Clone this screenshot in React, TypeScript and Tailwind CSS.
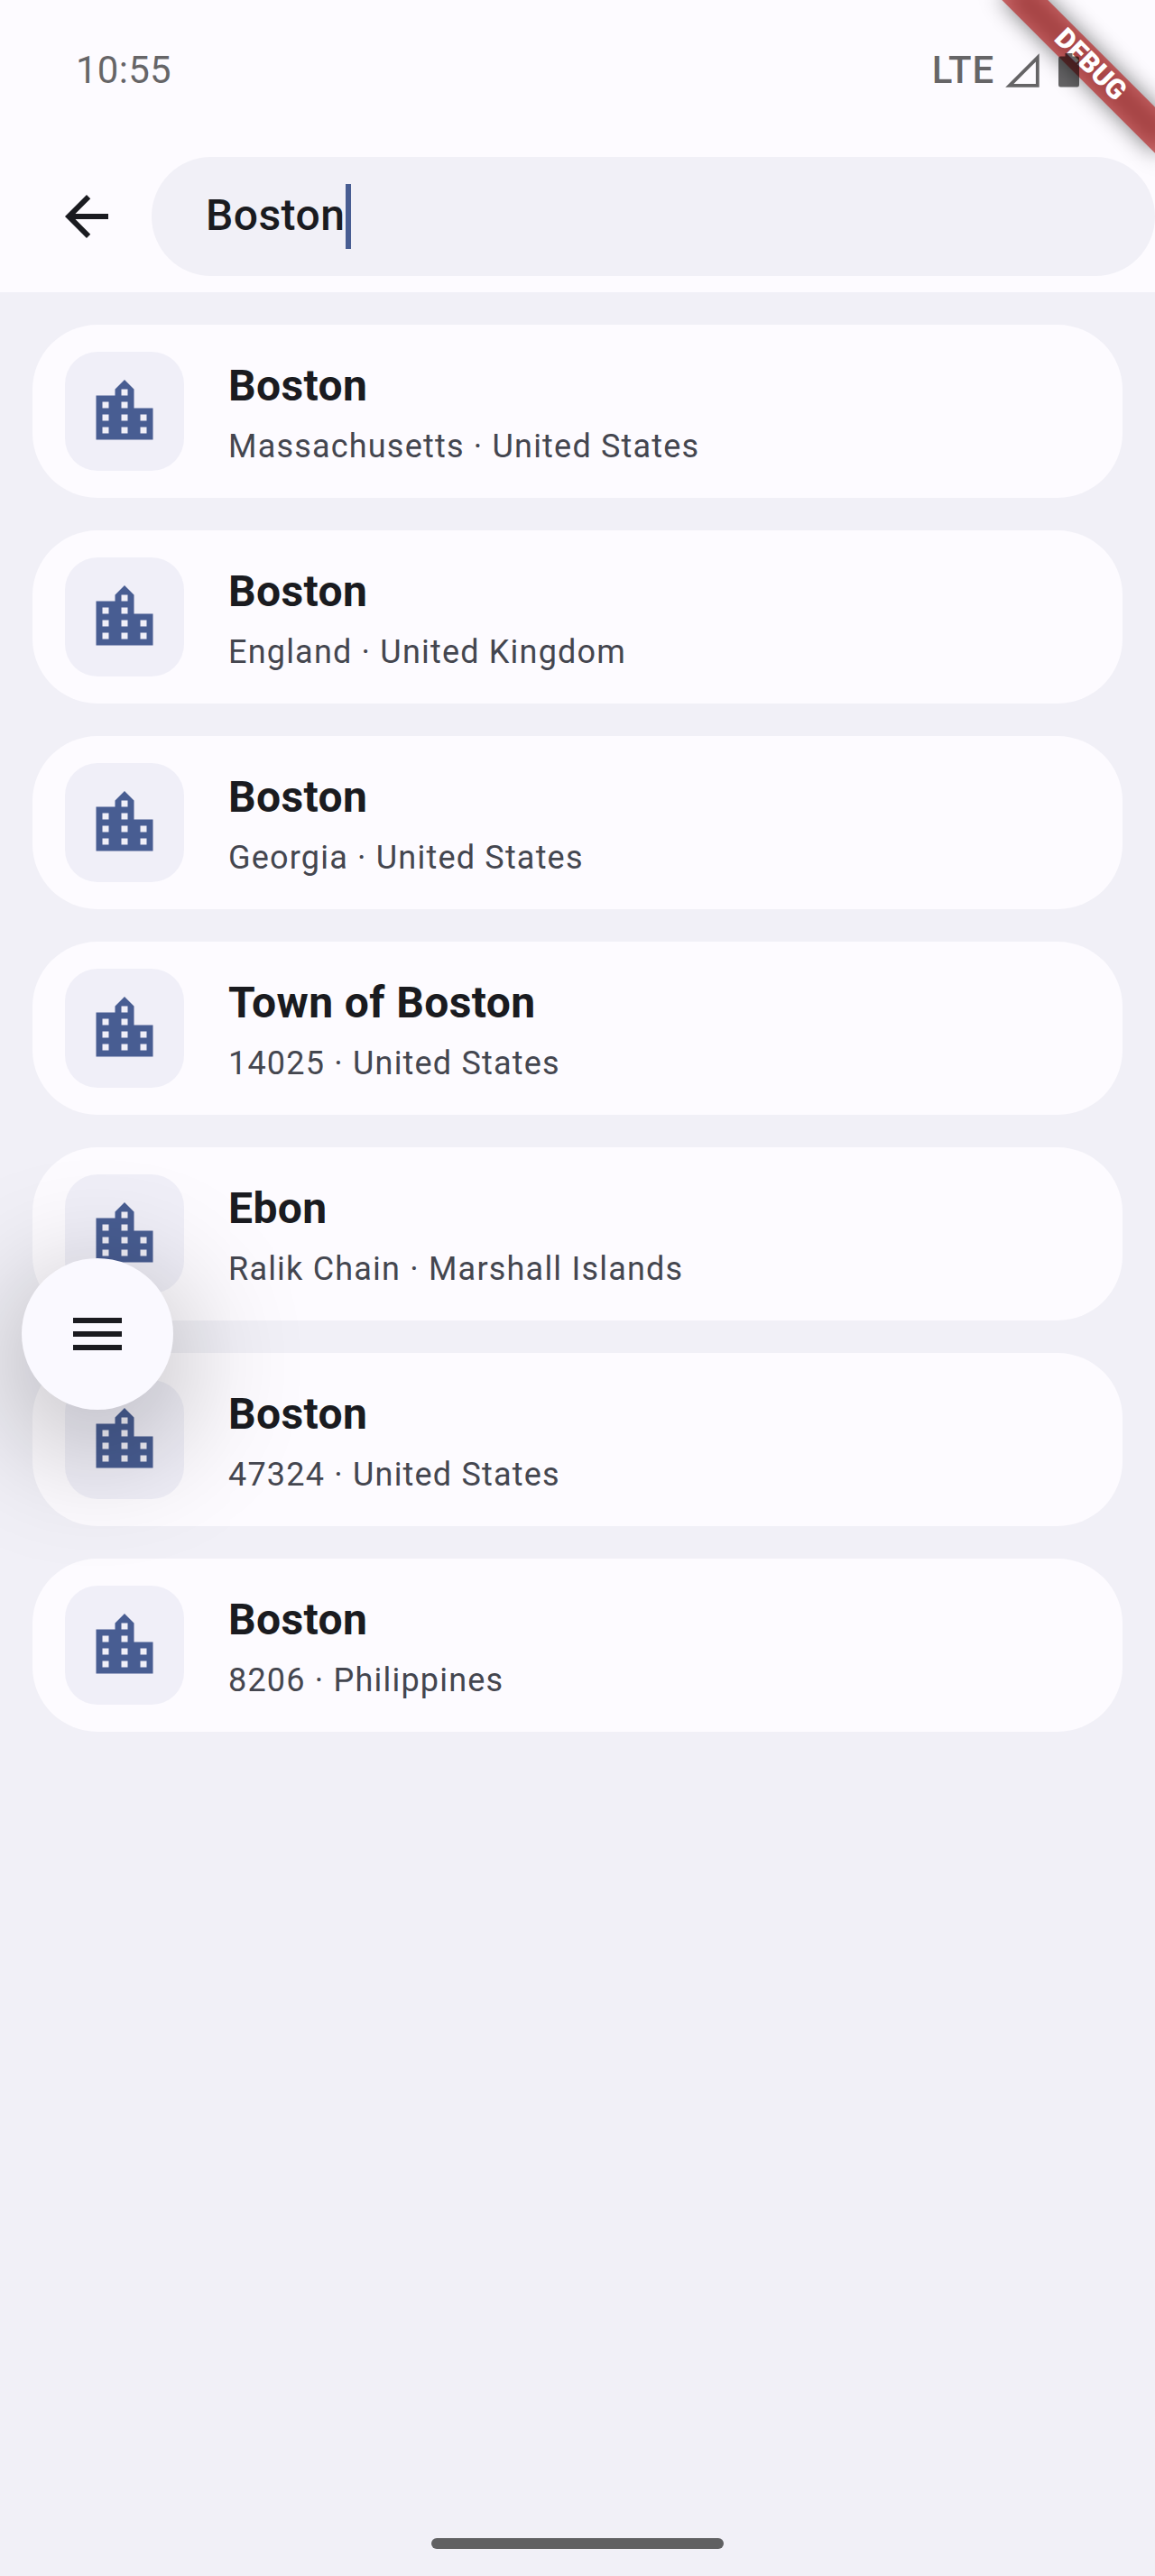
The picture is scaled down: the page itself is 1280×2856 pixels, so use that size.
import { MdArrowBack, MdLocationCity, MdMenu } from "react-icons/md";

const places = [
  { name: "Boston", detail: "Massachusetts · United States" },
  { name: "Boston", detail: "England · United Kingdom" },
  { name: "Boston", detail: "Georgia · United States" },
  { name: "Town of Boston", detail: "14025 · United States" },
  { name: "Ebon", detail: "Ralik Chain · Marshall Islands" },
  { name: "Boston", detail: "47324 · United States" },
  { name: "Boston", detail: "8206 · Philippines" },
];

function DebugBanner() {
  return (
    <div className="pointer-events-none absolute top-0 right-0 size-[300px] overflow-hidden">
      <div className="absolute top-[84px] left-[180px] h-[36px] w-[240px] origin-[120px_-84px] rotate-45 bg-black/50 blur-[12px]" />
      <div className="absolute top-[84px] left-[180px] flex h-[36px] w-[240px] origin-[120px_-84px] rotate-45 items-center justify-center bg-[#b71c1c]/63 pb-[2px] text-[30.6px] leading-none font-black text-white">
        DEBUG
      </div>
    </div>
  );
}

function StatusBar() {
  return (
    <div className="relative flex h-[156px] items-center justify-between pr-[84px] pl-[84px] text-[42px] leading-[50px] text-black/60">
      <span className="tracking-[0.25px]">10:55</span>
      <div className="flex items-center">
        <span className="font-medium tracking-[0.8px]">LTE</span>
        <svg className="ml-[12px] h-[38px] w-[39px]" viewBox="0 0 39 38">
          <path d="M35.8 4.8V35.8H4.8Z" fill="none" stroke="currentColor" strokeWidth="3.8" />
        </svg>
        <svg className="ml-[20px] h-[38px] w-[23px]" viewBox="0 0 23 38">
          <path
            d="M7.5 0h8v3.5h5.2A2.3 2.3 0 0 1 23 5.8v29.4a2.3 2.3 0 0 1-2.3 2.3H2.3A2.3 2.3 0 0 1 0 35.2V5.8a2.3 2.3 0 0 1 2.3-2.3h5.2Z"
            fill="currentColor"
          />
        </svg>
      </div>
    </div>
  );
}

function SearchBar() {
  return (
    <div className="flex h-[168px] items-center">
      <button className="flex w-[168px] shrink-0 pl-[60px]" aria-label="Back">
        <MdArrowBack className="size-[72px]" />
      </button>
      <div className="flex h-[132px] flex-1 items-center rounded-full bg-[#f1f0f7] pl-[60px]">
        <span className="pb-[3px] text-[48px] leading-[72px] font-medium tracking-[0.45px]">Boston</span>
        <span className="ml-px h-[72px] w-[6px] bg-[#485d92]" />
      </div>
    </div>
  );
}

function PlaceCard({ name, detail }: { name: string; detail: string }) {
  return (
    <li className="flex h-[192px] items-center gap-[49px] rounded-[72px] bg-[#fdfbff] px-[36px]">
      <div className="flex size-[132px] items-center justify-center rounded-[36px] bg-[#f0eff8]">
        <MdLocationCity className="size-[84px] text-[#485d92]" />
      </div>
      <div className="flex flex-col gap-[9px]">
        <div className="text-[48px] leading-[69px] font-bold tracking-[0.4px]">{name}</div>
        <div className="text-[36px] leading-[48px] tracking-[1.2px] text-[#44464f]">{detail}</div>
      </div>
    </li>
  );
}

export default function App() {
  return (
    <div className="relative flex h-[2856px] w-[1280px] flex-col overflow-hidden bg-[#f1f0f7] font-['Roboto',sans-serif] text-[#1a1b20]">
      <header className="bg-[#fdfbff]">
        <div className="relative z-10">
          <DebugBanner />
          <StatusBar />
        </div>
        <SearchBar />
      </header>
      <ul className="flex flex-1 flex-col gap-[36px] p-[36px]">
        {places.map((place) => (
          <PlaceCard key={place.detail} {...place} />
        ))}
      </ul>
      <div className="mb-[30px] h-[12px] w-[324px] self-center rounded-full bg-[#606062]" />
      <button
        aria-label="Menu"
        className="absolute top-[1395px] left-[24px] flex size-[168px] items-center justify-center rounded-full bg-[#faf9ff] shadow-[0_32px_140px_8px_rgba(0,0,0,0.29)]"
      >
        <MdMenu className="size-[72px]" />
      </button>
    </div>
  );
}
